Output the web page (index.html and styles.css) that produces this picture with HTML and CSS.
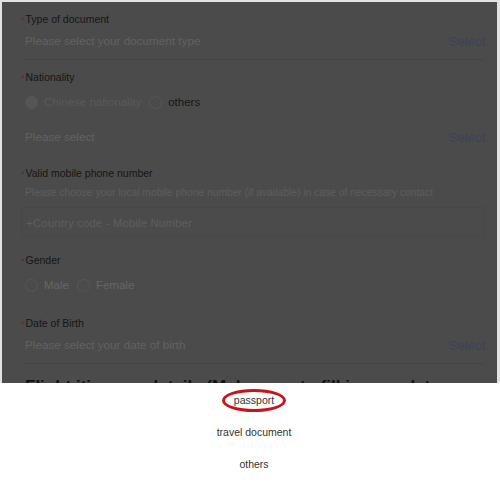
FILE: index.html
```html
<!DOCTYPE html>
<html lang="en">
<head>
    <meta charset="UTF-8">
    <meta name="viewport" content="width=device-width, initial-scale=1.0">
    <title>Personal information</title>
    <link rel="stylesheet" href="styles.css">
</head>
<body>
    <div class="screen">
        <div class="form">
            <div class="field first">
                <div class="label"><span class="star">*</span>Type of document</div>
                <div class="select-row">
                    <span class="placeholder">Please select your document type</span>
                    <span class="select-link">Select</span>
                </div>
            </div>
            <div class="field nationality">
                <div class="label"><span class="star">*</span>Nationality</div>
                <div class="radio-row">
                    <span class="radio disabled"></span><span class="radio-text disabled">Chinese nationality</span>
                    <span class="radio"></span><span class="radio-text strong">others</span>
                </div>
                <div class="select-row spaced">
                    <span class="placeholder">Please select</span>
                    <span class="select-link">Select</span>
                </div>
            </div>
            <div class="field phone">
                <div class="label"><span class="star">*</span>Valid mobile phone number</div>
                <div class="hint">Please choose your local mobile phone number (if available) in case of necessary contact</div>
                <div class="text-input">+Country code - Mobile Number</div>
            </div>
            <div class="field gender">
                <div class="label"><span class="star">*</span>Gender</div>
                <div class="radio-row">
                    <span class="radio"></span><span class="radio-text">Male</span>
                    <span class="radio"></span><span class="radio-text">Female</span>
                </div>
            </div>
            <div class="field birth">
                <div class="label"><span class="star">*</span>Date of Birth</div>
                <div class="select-row">
                    <span class="placeholder">Please select your date of birth</span>
                    <span class="select-link">Select</span>
                </div>
            </div>
            <h2 class="section-title">Flight itinerary details (Make sure to fill in complete</h2>
        </div>
    </div>
    <div class="sheet">
        <div class="option"><span class="circled">passport</span></div>
        <div class="option">travel document</div>
        <div class="option">others</div>
    </div>
</body>
</html>
```

FILE: styles.css
```css
* {
    box-sizing: border-box;
}
body {
    margin: 0;
    font-family: "Liberation Sans", Arial, sans-serif;
    background-color: #ffffff;
    width: 500px;
}
.screen {
    height: 383px;
    overflow: hidden;
    background-color: #4b4b4b;
    border: 2px solid #e2e2e2;
    border-bottom: none;
    border-right-width: 3px;
}
.form {
    padding: 0 12px 0 23px;
}
.field {
    border-bottom: 1px solid #444444;
}
.first {
    padding-top: 7px;
    height: 58px;
}
.nationality {
    padding-top: 7px;
    border-bottom: none;
    height: 103px;
}
.phone {
    height: 87px;
    border-bottom: none;
}
.gender {
    height: 63px;
    border-bottom: none;
}
.birth {
    height: 51px;
}
.label {
    height: 20px;
    line-height: 20px;
    font-size: 10.5px;
    color: #161616;
}
.star {
    color: #5a2a2a;
    font-size: 9px;
    margin: 0 1px 0 -4px;
}
.select-row {
    display: flex;
    justify-content: space-between;
    align-items: center;
    height: 20px;
    margin-top: 1px;
}
.select-row.spaced {
    margin-top: 14px;
}
.placeholder {
    font-size: 11.7px;
    color: #626262;
}
.select-link {
    font-size: 13px;
    color: #3c4358;
    margin-top: 2px;
}
.radio-row {
    display: flex;
    align-items: center;
    height: 20px;
    margin-top: 5px;
}
.radio {
    width: 13px;
    height: 13px;
    border: 1px solid #575757;
    border-radius: 50%;
    margin-right: 6px;
}
.radio.disabled {
    background-color: #555555;
}
.radio-text {
    font-size: 11.5px;
    color: #666666;
    margin-right: 8px;
}
.radio-text.disabled {
    color: #5a5a5a;
}
.radio-text.strong {
    color: #161616;
}
.hint {
    height: 20px;
    line-height: 20px;
    font-size: 10.3px;
    color: #5e5e5e;
}
.text-input {
    margin: 4px 0 0 -4px;
    height: 30px;
    line-height: 30px;
    padding-left: 4px;
    border: 1px solid #474747;
    border-radius: 2px;
    font-size: 11.7px;
    color: #5e5e5e;
}
.section-title {
    margin: 11px 0 0;
    font-size: 17px;
    line-height: 24px;
    font-weight: bold;
    color: #111111;
    white-space: nowrap;
}
.sheet {
    padding: 6px 0 0 8px;
}
.option {
    height: 32px;
    line-height: 22px;
    text-align: center;
    font-size: 10.5px;
    color: #333333;
}
.circled {
    display: inline-block;
    line-height: 15px;
    padding: 1px 9px;
    border: 3px solid #c4161c;
    border-radius: 50%;
}
```
